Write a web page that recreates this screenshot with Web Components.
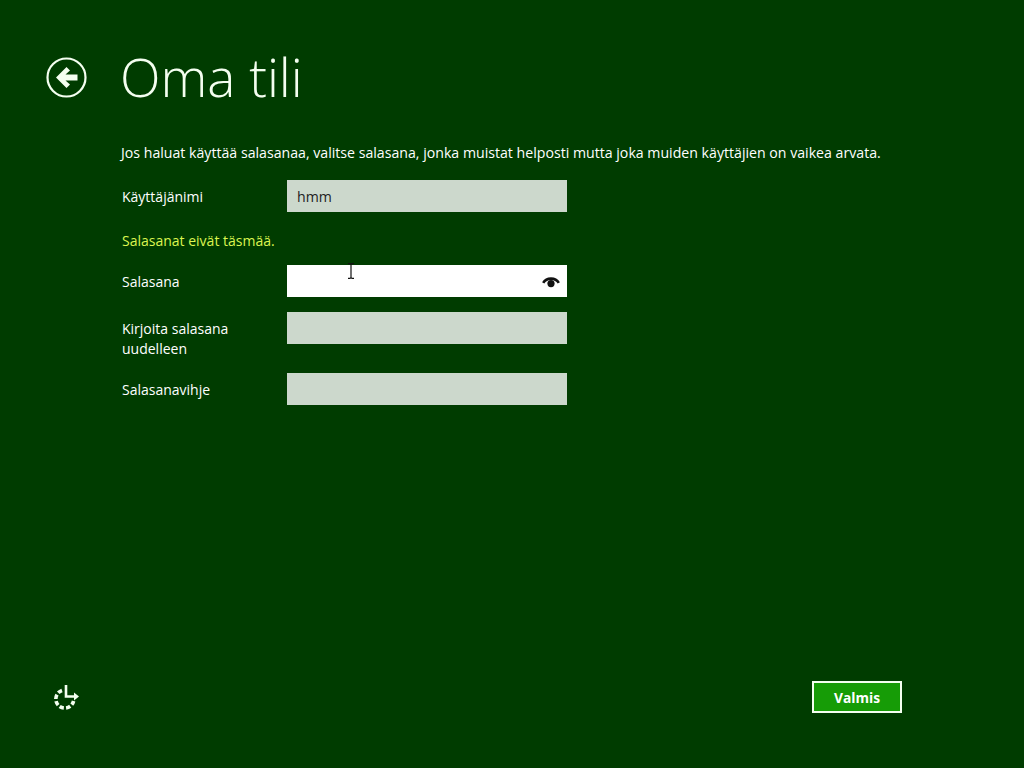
<!DOCTYPE html>
<html lang="fi">
<head>
<meta charset="utf-8">
<title>Oma tili</title>
<style>
  html, body { margin: 0; height: 100%; }
  body { background: #003c00; color: #fff; font-family: "Open Sans", "Noto Sans", sans-serif; overflow: hidden; }
</style>
</head>
<body>
<setup-page>
  <page-header slot="header" title="Oma tili"></page-header>
  <p slot="intro">Jos haluat käyttää salasanaa, valitse salasana, jonka muistat helposti mutta joka muiden käyttäjien on vaikea arvata.</p>
  <form-row slot="form" label="Käyttäjänimi" value="hmm"></form-row>
  <form-error slot="form">Salasanat eivät täsmää.</form-error>
  <form-row slot="form" label="Salasana" active></form-row>
  <form-row slot="form" label="Kirjoita salasana uudelleen"></form-row>
  <form-row slot="form" label="Salasanavihje"></form-row>
  <setup-footer slot="footer"></setup-footer>
</setup-page>

<script>
// Page frame: header, intro text, form, footer pinned to the bottom
class SetupPage extends HTMLElement {
  constructor() {
    super();
    this.attachShadow({ mode: "open" });
    this.shadowRoot.innerHTML = `
      <style>
        :host { display: flex; flex-direction: column; height: 768px; box-sizing: border-box; padding: 50px 0 0 46px; }
        .body { padding-left: 75px; display: flex; flex-direction: column; }
        .intro { display: block; margin-top: 39px; }
        ::slotted(p) { margin: 0; font-size: 14.15px; line-height: 20px; color: #fff; }
        .form { display: flex; flex-direction: column; width: 446px; margin-top: 17px; }
        .footer { display: block; margin-top: auto; }
      </style>
      <slot name="header"></slot>
      <div class="body">
        <div class="intro"><slot name="intro"></slot></div>
        <div class="form"><slot name="form"></slot></div>
      </div>
      <div class="footer"><slot name="footer"></slot></div>
    `;
  }
}

class PageHeader extends HTMLElement {
  constructor() {
    super();
    this.attachShadow({ mode: "open" });
    this.shadowRoot.innerHTML = `
      <style>
        :host { display: flex; align-items: center; gap: 33px; height: 54px; }
        svg { width: 41px; height: 41px; flex: none; }
        h1 { margin: 0; font-size: 53px; font-weight: 300; line-height: 54px; color: #f4fff0; }
      </style>
      <svg viewBox="0 0 41 41" aria-hidden="true">
        <circle cx="20.5" cy="20.5" r="19" fill="none" stroke="#f4fff0" stroke-width="2.2"/>
        <path d="M20.5 10 L10 20.5 L20.5 31 L24 27.5 L19.5 23.5 H31.5 V17.5 H19.5 L24 13.5 Z" fill="#f4fff0"/>
      </svg>
      <h1>${this.getAttribute("title")}</h1>
    `;
  }
}

// One label + field row. The "active" field is white and shows the reveal eye and the mouse cursor
class FormRow extends HTMLElement {
  constructor() {
    super();
    this.attachShadow({ mode: "open" });
    const active = this.hasAttribute("active");
    const eye = active ? `
      <svg class="eye" viewBox="0 0 18 12" aria-hidden="true">
        <path d="M1.2 6.8 C4.5 1.2 13.5 1.2 16.8 6.8" fill="none" stroke="#111" stroke-width="2.6"/>
        <circle cx="9" cy="7.6" r="3.6" fill="#111"/>
      </svg>
      <svg class="cursor" viewBox="0 0 8 16" aria-hidden="true">
        <path d="M1 .6 H3 L4 1.5 L5 .6 H7 M4 1.5 V14.5 M1 15.4 H3 L4 14.5 L5 15.4 H7" fill="none" stroke="#111" stroke-width="1.2"/>
      </svg>` : "";
    this.shadowRoot.innerHTML = `
      <style>
        :host { display: grid; grid-template-columns: 166px 280px; align-items: start; margin-bottom: 15px; }
        label { padding: 7px 0 0 1px; margin-bottom: -1px; font-size: 14px; line-height: 20px; color: #fff; width: 120px; }
        .field { position: relative; box-sizing: border-box; height: 32px; padding-left: 10px; background: #ccd8cc; color: #222; font-size: 14.15px; line-height: 33px; }
        :host([active]) .field { background: #fff; }
        .eye { position: absolute; left: 255px; top: 11px; width: 18px; height: 12px; }
        .cursor { position: absolute; left: 60px; top: -2px; width: 8px; height: 16px; }
      </style>
      <label>${this.getAttribute("label")}</label>
      <div class="field">${this.getAttribute("value") || ""}${eye}</div>
    `;
  }
}

class FormError extends HTMLElement {
  constructor() {
    super();
    this.attachShadow({ mode: "open" });
    this.shadowRoot.innerHTML = `
      <style>
        :host { display: block; padding-left: 1px; font-size: 14px; line-height: 20px; color: #dcf550; margin: 4px 0 14px; }
      </style>
      <slot></slot>
    `;
  }
}

class SetupFooter extends HTMLElement {
  constructor() {
    super();
    this.attachShadow({ mode: "open" });
    this.shadowRoot.innerHTML = `
      <style>
        :host { display: flex; align-items: center; justify-content: space-between; height: 32px; margin-bottom: 55px; padding: 0 122px 0 7px; }
        svg { width: 27px; height: 27px; }
        button { box-sizing: border-box; width: 90px; height: 32px; padding: 0; background: #169c06; border: 2px solid #f4fff0; border-radius: 0; color: #fff; font: 700 13.8px "Open Sans", "Noto Sans", sans-serif; }
      </style>
      <svg viewBox="0 0 27 27" aria-hidden="true">
        <path d="M9 6.5 A9 9 0 1 0 20.6 17" fill="none" stroke="#f4fff0" stroke-width="3.6" stroke-dasharray="4.4 2.2"/>
        <path d="M13 1 V12.5 H22" fill="none" stroke="#f4fff0" stroke-width="2.6"/>
        <path d="M21 8.5 L26 12.5 L21 16.5 Z" fill="#f4fff0"/>
      </svg>
      <button type="button">Valmis</button>
    `;
  }
}

customElements.define("setup-page", SetupPage);
customElements.define("page-header", PageHeader);
customElements.define("form-row", FormRow);
customElements.define("form-error", FormError);
customElements.define("setup-footer", SetupFooter);
</script>
</body>
</html>
